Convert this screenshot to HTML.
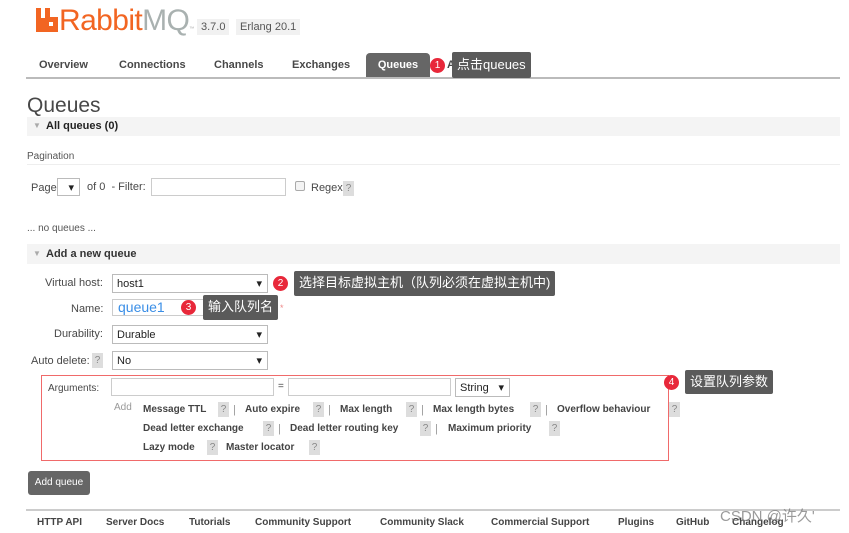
<!DOCTYPE html>
<html><head><meta charset="utf-8"><style>
*{margin:0;padding:0;box-sizing:border-box}
body{width:849px;height:533px;background:#fff;font-family:"Liberation Sans","Noto Sans CJK SC",sans-serif;color:#484848;position:relative;overflow:hidden;font-size:11px}
.a{position:absolute;white-space:nowrap}
.b{font-weight:bold}
.sel{position:absolute;border:1px solid #bbb;background:#fff;height:19px;font-size:11px;padding:3px 4px;color:#222}
.sel:after{content:"▾";position:absolute;right:5px;top:2px;font-size:11px;color:#222}
.inp{position:absolute;border:1px solid #ccc;background:#fff;height:18px}
.q{position:absolute;background:#ddd;color:#888;font-size:10px;width:11px;height:15px;text-align:center;line-height:15px}
.tip{position:absolute;background:#5a5a5a;color:#fff;font-size:13px;padding:0 5px;height:24px;line-height:24px;border-radius:2px;white-space:nowrap}
.dot{position:absolute;width:15px;height:15px;border-radius:50%;background:#e8283a;color:#fff;font-size:10px;text-align:center;line-height:15px}
.bar{position:absolute;left:27px;width:813px;background:#f4f4f4}
</style></head><body>
<svg class="a" style="left:36px;top:8px" width="22" height="24" viewBox="0 0 22 24"><path d="M0 0h5v10h4V0h5v9h8v15H0z" fill="#f26522"/><rect x="13" y="14" width="4" height="4" fill="#fff"/></svg>
<div class="a" style="left:59px;top:4px;font-size:30px;color:#f26522;letter-spacing:-0.6px">Rabbit<span style="color:#a9b1b0">MQ</span><span style="font-size:5px;color:#aaa">™</span></div>
<div class="a" style="left:197px;top:19px;background:#f1f1f1;padding:2px 4px;font-size:11px;color:#555">3.7.0</div>
<div class="a" style="left:236px;top:19px;background:#f1f1f1;padding:2px 4px;font-size:11px;color:#555">Erlang 20.1</div>
<div class="a" style="left:26px;top:77px;width:814px;height:2px;background:#bbb"></div>
<div class="a b" style="left:39px;top:59px;font-size:11px">Overview</div>
<div class="a b" style="left:119px;top:59px;font-size:11px">Connections</div>
<div class="a b" style="left:214px;top:59px;font-size:11px">Channels</div>
<div class="a b" style="left:292px;top:59px;font-size:11px">Exchanges</div>
<div class="a b" style="left:366px;top:53px;width:64px;height:24px;background:#666;color:#fff;border-radius:4px 4px 0 0;text-align:center;line-height:24px;font-size:11px">Queues</div>
<div class="a b" style="left:447px;top:59px;font-size:11px">Ad</div>
<div class="dot" style="left:430px;top:58px">1</div>
<div class="tip" style="left:452px;top:52px;height:26px;line-height:26px">点击queues</div>
<div class="a" style="left:27px;top:94px;font-size:21px;color:#484848">Queues</div>
<div class="bar" style="top:117px;height:19px"></div>
<div class="a b" style="left:33px;top:121px;font-size:8px;color:#aaa">▼</div>
<div class="a b" style="left:46px;top:120px;font-size:11px;color:#222">All queues (0)</div>
<div class="a" style="left:27px;top:151px;font-size:10px;color:#555">Pagination</div>
<div class="a" style="left:27px;top:164px;width:813px;height:1px;background:#eee"></div>
<div class="a" style="left:31px;top:182px;font-size:11px">Page</div>
<div class="sel" style="left:57px;top:178px;width:23px;height:18px"></div>
<div class="a" style="left:87px;top:181px;font-size:11px">of 0 &nbsp;- Filter:</div>
<div class="inp" style="left:151px;top:178px;width:135px"></div>
<div class="a" style="left:295px;top:181px;width:10px;height:10px;border:1px solid #aaa;background:#f4f4f4;border-radius:2px"></div>
<div class="a" style="left:311px;top:182px;font-size:11px">Regex</div>
<div class="q" style="left:343px;top:181px">?</div>
<div class="a" style="left:27px;top:223px;font-size:10px;color:#555">... no queues ...</div>
<div class="bar" style="top:244px;height:20px"></div>
<div class="a b" style="left:33px;top:249px;font-size:8px;color:#aaa">▼</div>
<div class="a b" style="left:46px;top:248px;font-size:11px;color:#333">Add a new queue</div>
<div class="a" style="left:45px;top:277px;font-size:11px">Virtual host:</div>
<div class="sel" style="left:112px;top:274px;width:156px">host1</div>
<div class="dot" style="left:273px;top:276px">2</div>
<div class="tip" style="left:294px;top:271px;height:25px">选择目标虚拟主机（队列必须在虚拟主机中)</div>
<div class="a" style="left:71px;top:303px;font-size:11px">Name:</div>
<div class="inp" style="left:112px;top:299px;width:150px;height:17px"></div>
<div class="a" style="left:118px;top:299px;font-size:14px;color:#3a8ee6">queue1</div>
<div class="dot" style="left:181px;top:300px">3</div>
<div class="tip" style="left:203px;top:295px;height:25px">输入队列名</div>
<div class="a" style="left:280px;top:303px;font-size:9px;color:#e88">*</div>
<div class="a" style="left:54px;top:328px;font-size:11px">Durability:</div>
<div class="sel" style="left:112px;top:325px;width:156px">Durable</div>
<div class="a" style="left:31px;top:355px;font-size:11px">Auto delete:</div>
<div class="q" style="left:92px;top:353px">?</div>
<div class="sel" style="left:112px;top:351px;width:156px">No</div>
<div class="a" style="left:41px;top:375px;width:628px;height:86px;border:1px solid #f06a6a"></div>
<div class="a" style="left:48px;top:383px;font-size:10px">Arguments:</div>
<div class="inp" style="left:111px;top:378px;width:163px"></div>
<div class="a" style="left:278px;top:381px;font-size:10px">=</div>
<div class="inp" style="left:288px;top:378px;width:163px"></div>
<div class="sel" style="left:455px;top:378px;width:55px">String</div>
<div class="dot" style="left:664px;top:375px">4</div>
<div class="tip" style="left:685px;top:370px;height:24px">设置队列参数</div>
<div class="a" style="left:114px;top:402px;font-size:10px;color:#999">Add</div>
<div class="a b" style="left:143px;top:404px;font-size:10px;color:#444">Message TTL</div>
<div class="q" style="left:218px;top:402px">?</div><div class="a" style="left:233px;top:404px;color:#999">|</div>
<div class="a b" style="left:245px;top:404px;font-size:10px;color:#444">Auto expire</div>
<div class="q" style="left:313px;top:402px">?</div><div class="a" style="left:328px;top:404px;color:#999">|</div>
<div class="a b" style="left:340px;top:404px;font-size:10px;color:#444">Max length</div>
<div class="q" style="left:406px;top:402px">?</div><div class="a" style="left:421px;top:404px;color:#999">|</div>
<div class="a b" style="left:433px;top:404px;font-size:10px;color:#444">Max length bytes</div>
<div class="q" style="left:530px;top:402px">?</div><div class="a" style="left:545px;top:404px;color:#999">|</div>
<div class="a b" style="left:557px;top:404px;font-size:10px;color:#444">Overflow behaviour</div>
<div class="q" style="left:669px;top:402px">?</div>
<div class="a b" style="left:143px;top:423px;font-size:10px;color:#444">Dead letter exchange</div>
<div class="q" style="left:263px;top:421px">?</div><div class="a" style="left:278px;top:423px;color:#999">|</div>
<div class="a b" style="left:290px;top:423px;font-size:10px;color:#444">Dead letter routing key</div>
<div class="q" style="left:420px;top:421px">?</div><div class="a" style="left:435px;top:423px;color:#999">|</div>
<div class="a b" style="left:448px;top:423px;font-size:10px;color:#444">Maximum priority</div>
<div class="q" style="left:549px;top:421px">?</div>
<div class="a b" style="left:143px;top:442px;font-size:10px;color:#444">Lazy mode</div>
<div class="q" style="left:207px;top:440px">?</div>
<div class="a b" style="left:226px;top:442px;font-size:10px;color:#444">Master locator</div>
<div class="q" style="left:309px;top:440px">?</div>
<div class="a" style="left:28px;top:471px;width:62px;height:24px;background:#666;color:#fff;border-radius:3px;text-align:center;line-height:24px;font-size:10px">Add queue</div>
<div class="a" style="left:26px;top:509px;width:814px;height:2px;background:#ccc"></div>
<div class="a b" style="left:37px;top:517px;font-size:10px;color:#444">HTTP API</div>
<div class="a b" style="left:106px;top:517px;font-size:10px;color:#444">Server Docs</div>
<div class="a b" style="left:189px;top:517px;font-size:10px;color:#444">Tutorials</div>
<div class="a b" style="left:255px;top:517px;font-size:10px;color:#444">Community Support</div>
<div class="a b" style="left:380px;top:517px;font-size:10px;color:#444">Community Slack</div>
<div class="a b" style="left:491px;top:517px;font-size:10px;color:#444">Commercial Support</div>
<div class="a b" style="left:618px;top:517px;font-size:10px;color:#444">Plugins</div>
<div class="a b" style="left:676px;top:517px;font-size:10px;color:#444">GitHub</div>
<div class="a b" style="left:732px;top:517px;font-size:10px;color:#444">Changelog</div>
<div class="a" style="left:720px;top:505px;font-size:15px;color:rgba(120,120,120,0.75)">CSDN @许久'</div>
</body></html>
